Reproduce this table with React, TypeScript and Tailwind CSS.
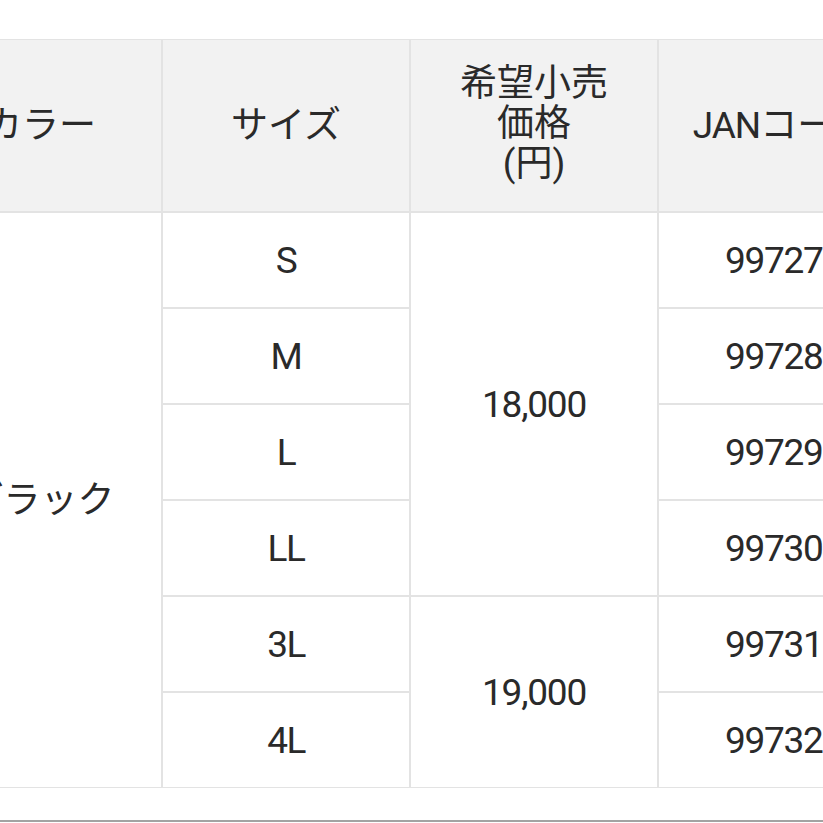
import React from "react";

const cell = "border border-[#e3e3e3] p-0 text-center align-middle";

export default function App() {
  const rows = [
    { size: "S", jan: "997270" },
    { size: "M", jan: "997281" },
    { size: "L", jan: "997298" },
    { size: "LL", jan: "997304" },
    { size: "3L", jan: "997311" },
    { size: "4L", jan: "997328" },
  ];
  return (
    <div
      className="w-[823px] h-[823px] overflow-hidden bg-white text-[#2a2a2a] flex flex-col"
      style={{ fontFamily: "Roboto, 'Noto Sans CJK JP', sans-serif" }}
    >
      <div className="h-[39px] shrink-0" />
      <table
        className="table-fixed ml-[-81px] w-[987px] shrink-0 text-[37px] leading-[39px]"
        style={{ borderCollapse: "separate", borderSpacing: 0 }}
      >
        <colgroup>
          <col className="w-[243px]" />
          <col className="w-[248px]" />
          <col className="w-[248px]" />
          <col className="w-[248px]" />
        </colgroup>
        <thead>
          <tr className="h-[173px] bg-[#f2f2f2]">
            <th className={`${cell} font-normal`}>カラー</th>
            <th className={`${cell} font-normal`}>サイズ</th>
            <th className={`${cell} font-normal leading-[40px]`}>
              <div className="pb-[4px]">
                希望小売
                <br />
                価格
                <br />
                (円)
              </div>
            </th>
            <th className={`${cell} font-normal`}>
              <span className="tracking-[-1px]">JAN</span>コード
            </th>
          </tr>
        </thead>
        <tbody>
          {rows.map((r, i) => (
            <tr key={r.size} className="h-[96px]">
              {i === 0 && (
                <td className={cell} rowSpan={6}>
                  ブラック
                </td>
              )}
              <td className={`${cell} tracking-[-1.5px]`}>{r.size}</td>
              {i === 0 && (
                <td className={`${cell} tracking-[-1.2px]`} rowSpan={4}>
                  18,000
                </td>
              )}
              {i === 4 && (
                <td className={`${cell} tracking-[-1.2px]`} rowSpan={2}>
                  19,000
                </td>
              )}
              <td className="border border-[#e3e3e3] p-0 pl-[66px] text-left align-middle tracking-[-1.3px] whitespace-nowrap">
                {r.jan}
              </td>
            </tr>
          ))}
        </tbody>
      </table>
      <div className="mt-[32px] h-[2px] bg-[#a3a3a3] shrink-0 w-full" />
    </div>
  );
}
